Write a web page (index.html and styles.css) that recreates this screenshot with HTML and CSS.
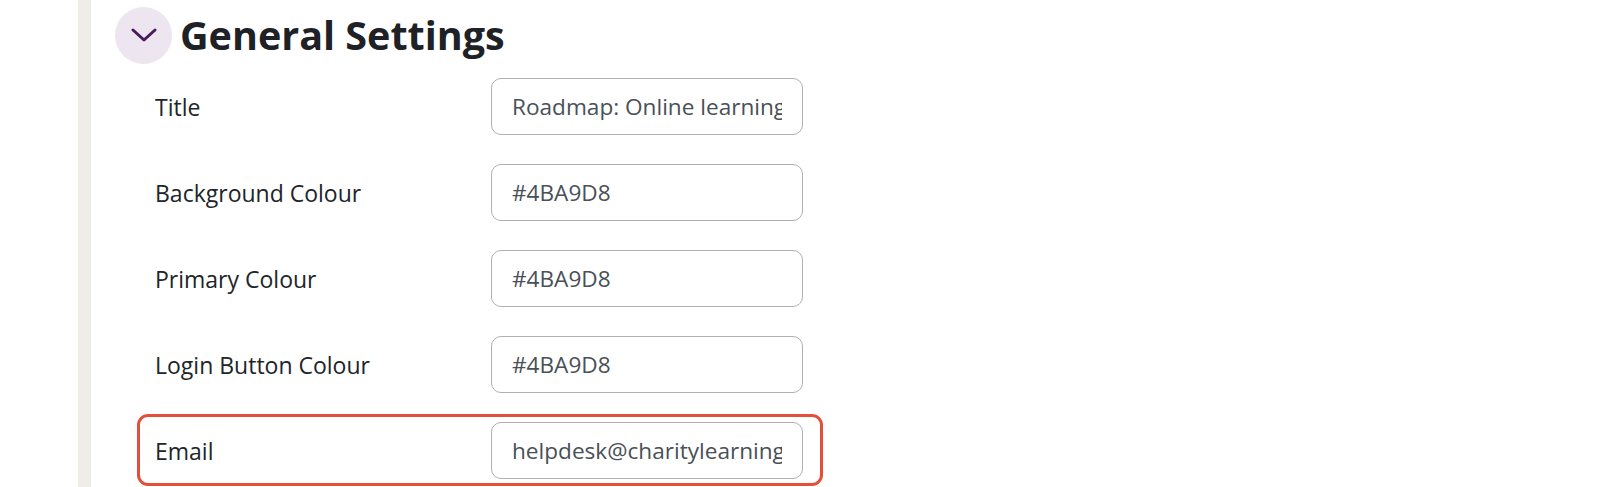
FILE: index.html
```html
<!DOCTYPE html>
<html lang="en">
<head>
<meta charset="utf-8">
<title>General Settings</title>
<link rel="stylesheet" href="styles.css">
</head>
<body>
<div class="page">
  <div class="gutter"></div>
  <div class="strip"></div>
  <main class="main">
    <div class="section-header">
      <button class="toggle" type="button" aria-label="Collapse">
        <svg width="26" height="14" viewBox="0 0 26 14" aria-hidden="true">
          <path d="M2 2 L13 12 L24 2" fill="none" stroke="#4a1a5e" stroke-width="3" stroke-linecap="round" stroke-linejoin="round"/>
        </svg>
      </button>
      <h2 class="section-title">General Settings</h2>
    </div>
    <div class="fields">
      <div class="row">
        <label class="label">Title</label>
        <input class="field" type="text" value="Roadmap: Online learning">
      </div>
      <div class="row">
        <label class="label">Background Colour</label>
        <input class="field" type="text" value="#4BA9D8">
      </div>
      <div class="row">
        <label class="label">Primary Colour</label>
        <input class="field" type="text" value="#4BA9D8">
      </div>
      <div class="row">
        <label class="label">Login Button Colour</label>
        <input class="field" type="text" value="#4BA9D8">
      </div>
      <div class="row row-highlight">
        <label class="label">Email</label>
        <input class="field" type="text" value="helpdesk@charitylearning.org">
      </div>
    </div>
  </main>
</div>
</body>
</html>
```

FILE: styles.css
```css
html, body {
  margin: 0;
  padding: 0;
  background: #ffffff;
}

body {
  font-family: "Open Sans", "Noto Sans", "Liberation Sans", sans-serif;
  color: #212529;
  overflow: hidden;
}

.page {
  display: flex;
  min-height: 487px;
}

.gutter {
  width: 78px;
  flex: none;
}

.strip {
  width: 13px;
  flex: none;
  background: #f0ede8;
}

.main {
  flex: 1;
  padding-left: 24px;
}

.section-header {
  display: flex;
  align-items: center;
  height: 57px;
  margin-top: 7px;
  gap: 8px;
}

.toggle {
  width: 57px;
  height: 57px;
  border-radius: 50%;
  border: none;
  background: #ede6f0;
  display: flex;
  align-items: center;
  justify-content: center;
  padding: 0;
  padding-bottom: 2px;
}

.section-title {
  margin: 0;
  font-size: 39.5px;
  line-height: 57px;
  font-weight: 700;
  color: #1e2125;
}

.fields {
  display: flex;
  flex-direction: column;
  align-items: flex-start;
  gap: 14px;
  margin-top: 6px;
  margin-left: 22px;
}

.row {
  display: flex;
  align-items: center;
  box-sizing: border-box;
  border: 3px solid transparent;
  border-radius: 11px;
  padding: 5px 17px 4px 15px;
}

.row-highlight {
  border-color: #e2503b;
}

.label {
  width: 336px;
  flex: none;
  font-size: 23px;
  color: #212529;
}

.field {
  width: 312px;
  height: 57px;
  box-sizing: border-box;
  border: 1px solid #adb1b6;
  border-radius: 10px;
  padding: 0 20px;
  font-family: inherit;
  font-size: 22.6px;
  color: #495057;
  background: #ffffff;
  outline: none;
}
```
